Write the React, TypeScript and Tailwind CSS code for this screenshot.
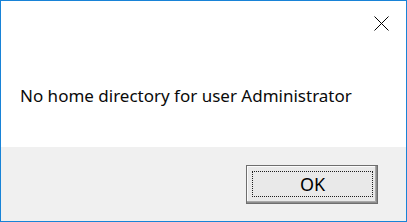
export default function App() {
  return (
    <div
      className="flex h-[222px] w-[407px] flex-col border border-[#1883d7] bg-white text-black"
      style={{ fontFamily: '"Noto Sans", "Open Sans", sans-serif' }}
    >
      <div className="flex h-[146px] flex-col">
        <div className="flex justify-end pr-[17px] pt-[15px]">
          <svg width="15" height="15" viewBox="0 0 15 15" className="block">
            <path d="M0.5 0.5 L14.5 14.5 M14.5 0.5 L0.5 14.5" stroke="#000" strokeWidth="1" fill="none" />
          </svg>
        </div>
        <p className="mt-[55px] pl-[19px] text-[17px] leading-[20px] text-[#0a0a0a]">
          No home directory for user Administrator
        </p>
      </div>
      <div className="flex flex-1 items-start justify-end bg-[#f0f0f0] pr-[28px] pt-[18px]">
        <button className="flex h-[39px] w-[132px] border border-[#6e6e6e] bg-[#e9e9e9] pb-[6px] pl-[5px] pr-[4px] pt-[5px] shadow-[inset_-1px_-1px_0_#8d8d8d,inset_-2px_-2px_0_#a8a8a8,inset_1px_1px_0_#fbfbfb]">
          <span className="flex h-full w-full items-center justify-center border border-dotted border-[#1e1e1e] pb-[1px] text-[18px] leading-none">
            OK
          </span>
        </button>
      </div>
    </div>
  );
}
